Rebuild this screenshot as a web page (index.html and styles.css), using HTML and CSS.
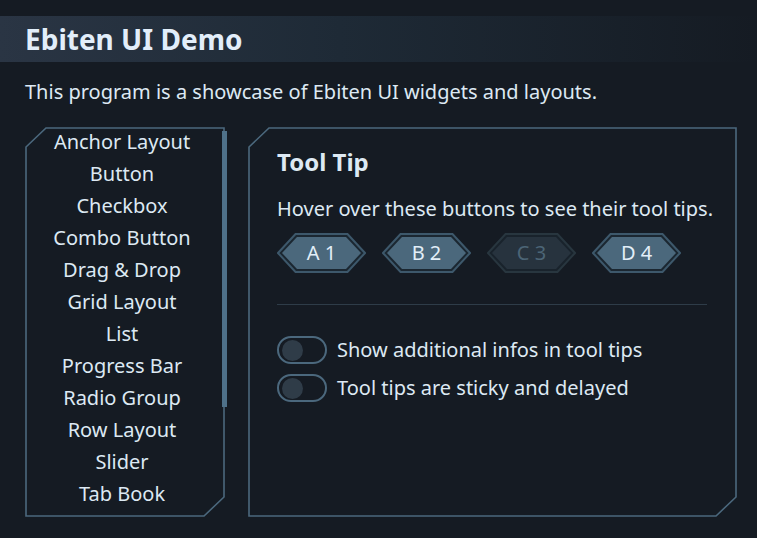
FILE: index.html
```html
<!DOCTYPE html>
<html>
<head>
<meta charset="utf-8">
<link rel="stylesheet" href="styles.css">
</head>
<body>
<header class="titlebar"><h1 class="title">Ebiten UI Demo</h1></header>
<p class="intro">This program is a showcase of Ebiten UI widgets and layouts.</p>
<main class="main">
  <nav class="list">
    <svg class="frame" width="200" height="390" viewBox="0 0 200 390"><polygon points="1,20 21,1 199,1 199,370 179,389 1,389" fill="none" stroke="#4b687d" stroke-width="1.6"/></svg>
    <div class="scrollbar"></div>
    <ul class="items">
      <li>Anchor Layout</li>
      <li>Button</li>
      <li>Checkbox</li>
      <li>Combo Button</li>
      <li>Drag &amp; Drop</li>
      <li>Grid Layout</li>
      <li>List</li>
      <li>Progress Bar</li>
      <li>Radio Group</li>
      <li>Row Layout</li>
      <li>Slider</li>
      <li>Tab Book</li>
    </ul>
  </nav>
  <section class="panel">
    <svg class="frame" width="489" height="390" viewBox="0 0 489 390"><polygon points="1,20 21,1 488,1 488,370 468,389 1,389" fill="none" stroke="#4b687d" stroke-width="1.6"/></svg>
    <h2 class="heading">Tool Tip</h2>
    <p class="hint">Hover over these buttons to see their tool tips.</p>
    <div class="buttons">
      <div class="hexbtn">
        <svg class="hex" width="89" height="40" viewBox="0 0 89 40"><polygon points="1,20 18.5,1 70.5,1 88,20 70.5,39 18.5,39" fill="#1b2731" stroke="#3d586b" stroke-width="2"/><polygon points="5,20 20,4 69,4 84,20 69,36 20,36" fill="#4b687c"/></svg>
        <span class="label">A 1</span>
      </div>
      <div class="hexbtn">
        <svg class="hex" width="89" height="40" viewBox="0 0 89 40"><polygon points="1,20 18.5,1 70.5,1 88,20 70.5,39 18.5,39" fill="#1b2731" stroke="#3d586b" stroke-width="2"/><polygon points="5,20 20,4 69,4 84,20 69,36 20,36" fill="#4b687c"/></svg>
        <span class="label">B 2</span>
      </div>
      <div class="hexbtn disabled">
        <svg class="hex" width="89" height="40" viewBox="0 0 89 40"><polygon points="1,20 18.5,1 70.5,1 88,20 70.5,39 18.5,39" fill="#19232c" stroke="#28363f" stroke-width="2"/><polygon points="5,20 20,4 69,4 84,20 69,36 20,36" fill="#27333e"/></svg>
        <span class="label">C 3</span>
      </div>
      <div class="hexbtn">
        <svg class="hex" width="89" height="40" viewBox="0 0 89 40"><polygon points="1,20 18.5,1 70.5,1 88,20 70.5,39 18.5,39" fill="#1b2731" stroke="#3d586b" stroke-width="2"/><polygon points="5,20 20,4 69,4 84,20 69,36 20,36" fill="#4b687c"/></svg>
        <span class="label">D 4</span>
      </div>
    </div>
    <hr class="divider">
    <div class="toggles">
      <label class="toggle-row"><span class="toggle"><span class="knob"></span></span><span class="toggle-text">Show additional infos in tool tips</span></label>
      <label class="toggle-row"><span class="toggle"><span class="knob"></span></span><span class="toggle-text">Tool tips are sticky and delayed</span></label>
    </div>
  </section>
</main>
</body>
</html>
```

FILE: styles.css
```css
html, body {
  margin: 0;
  padding: 0;
  background: #151b23;
  width: 757px;
  height: 538px;
  overflow: hidden;
}
body {
  font-family: "Noto Sans", "Open Sans", sans-serif;
  color: #dde9f3;
}
.titlebar {
  margin-top: 16px;
  height: 46px;
  padding-left: 25px;
  background: linear-gradient(to right, #2a3544 0%, #1e2a36 45%, #151b23 100%);
  display: flex;
  align-items: center;
}
.title {
  margin: 0;
  font-size: 28px;
  font-weight: 700;
  line-height: 34px;
  color: #e2eefa;
}
.intro {
  margin: 16px 0 0 25px;
  font-size: 20px;
  line-height: 28px;
}
.main {
  display: flex;
  gap: 23px;
  padding-left: 25px;
  margin-top: 21px;
}
.frame {
  position: absolute;
  left: 0;
  top: 0;
  pointer-events: none;
}
.list {
  position: relative;
  width: 200px;
  height: 390px;
  flex: none;
}
.scrollbar {
  position: absolute;
  left: 197px;
  top: 4px;
  width: 5px;
  height: 276px;
  background: #4f7189;
}
.items {
  list-style: none;
  margin: -1px 0 0 0;
  padding: 0 6px 0 0;
  font-size: 20px;
  line-height: 32px;
  text-align: center;
}
.panel {
  position: relative;
  width: 489px;
  height: 390px;
  flex: none;
  padding: 18px 0 0 29px;
  box-sizing: border-box;
}
.heading {
  margin: 0;
  font-size: 24px;
  font-weight: 700;
  line-height: 34px;
}
.hint {
  margin: 16px 0 0 0;
  font-size: 20px;
  line-height: 28px;
}
.buttons {
  display: flex;
  gap: 16px;
  margin-top: 10px;
}
.hexbtn {
  position: relative;
  width: 89px;
  height: 40px;
  display: flex;
  align-items: center;
  justify-content: center;
}
.hex {
  position: absolute;
  left: 0;
  top: 0;
}
.label {
  position: relative;
  font-size: 20px;
  line-height: 28px;
  color: #e2eef8;
}
.disabled .label {
  color: #4c6576;
}
.divider {
  width: 430px;
  margin: 31px 0 0 0;
  border: none;
  border-top: 1px solid #2e3c48;
  height: 0;
}
.toggles {
  margin-top: 31px;
  display: flex;
  flex-direction: column;
  gap: 10px;
}
.toggle-row {
  display: flex;
  align-items: center;
  gap: 10px;
  height: 28px;
}
.toggle {
  width: 50px;
  height: 28px;
  box-sizing: border-box;
  border: 2px solid #4b687d;
  border-radius: 14px;
  display: flex;
  align-items: center;
  padding-left: 3px;
}
.knob {
  width: 21px;
  height: 21px;
  border-radius: 50%;
  background: #2f3c48;
}
.toggle-text {
  font-size: 20px;
  line-height: 28px;
}
```
